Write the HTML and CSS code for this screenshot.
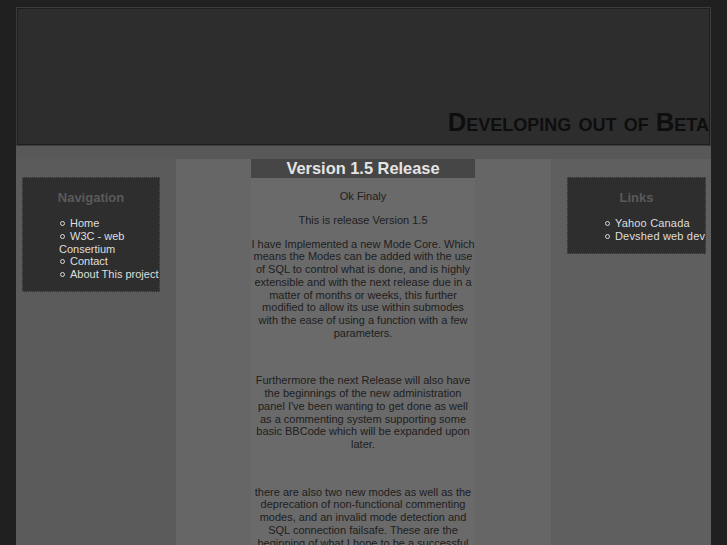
FILE: index.html
```html
<!DOCTYPE html>
<html>
<head>
<meta charset="utf-8">
<title>Developing out of Beta</title>
<link rel="stylesheet" href="styles.css">
</head>
<body>
<div class="page">
  <div class="header">
    <h1 class="site-title">Developing out of Beta</h1>
  </div>
  <div class="band"></div>
  <div class="cols">
    <div class="col-left">
      <div class="box box-left">
        <h3 class="box-title">Navigation</h3>
        <ul class="box-list">
          <li>Home</li>
          <li>W3C - web Consertium</li>
          <li>Contact</li>
          <li class="nowrap">About This project</li>
        </ul>
      </div>
    </div>
    <div class="col-center">
      <div class="content">
        <h2 class="post-title">Version 1.5 Release</h2>
        <p>Ok Finaly</p>
        <p>This is release Version 1.5</p>
        <p>I have Implemented a new Mode Core. Which means the Modes can be added with the use of SQL to control what is done, and is highly extensible and with the next release due in a matter of months or weeks, this further modified to allow its use within submodes with the ease of using a function with a few parameters.</p>
        <p>&nbsp;</p>
        <p>Furthermore the next Release will also have the beginnings of the new administration panel I've been wanting to get done as well as a commenting system supporting some basic BBCode which will be expanded upon later.</p>
        <p>&nbsp;</p>
        <p>there are also two new modes as well as the deprecation of non-functional commenting modes, and an invalid mode detection and SQL connection failsafe. These are the beginning of what I hope to be a successful project.</p>
      </div>
    </div>
    <div class="col-right">
      <div class="box box-right">
        <h3 class="box-title">Links</h3>
        <ul class="box-list">
          <li class="nowrap">Yahoo Canada</li>
          <li class="nowrap">Devshed web development</li>
        </ul>
      </div>
    </div>
  </div>
</div>
</body>
</html>
```

FILE: styles.css
```css
html {
  overflow: hidden;
}
body {
  margin: 0;
  background: #202020;
  font-family: "Liberation Sans", Arial, sans-serif;
  font-size: 11px;
  line-height: 12.75px;
}
.page {
  margin: 7px 0 0 16px;
  width: 695px;
}
.header {
  height: 137px;
  background: #2d2d2d;
  border: 1px solid #3c3c3c;
  box-shadow: inset 0 0 0 1px #1e1e1e;
  display: flex;
  align-items: flex-end;
  justify-content: flex-end;
}
.site-title {
  margin: 0 1px 10px 0;
  font-size: 25.7px;
  line-height: 25px;
  font-weight: bold;
  font-variant: small-caps;
  color: #0e0e0e;
}
.band {
  height: 13px;
  background: #585858;
}
.cols {
  display: flex;
}
.col-left {
  width: 160px;
  background: #5b5b5b;
}
.col-center {
  width: 375px;
  background: #666666;
}
.col-right {
  width: 160px;
  background: #5f5f5f;
}
.content {
  width: 224px;
  margin-left: 75px;
  background: #6a6a6a;
  color: #202020;
  text-align: center;
  padding-bottom: 20px;
}
.post-title {
  margin: 0;
  background: #464646;
  color: #e4e4e4;
  font-size: 16.4px;
  line-height: 19px;
  font-weight: bold;
}
.content p {
  margin: 11px 0;
}
.content p:first-of-type {
  margin-top: 12px;
}
.box {
  margin-top: 18px;
  width: 136px;
  background: #2e2e2e;
  border: 1px dotted #505050;
  padding-bottom: 10px;
}
.box-left {
  margin-left: 6px;
}
.box-right {
  margin-left: 16px;
  width: 137px;
  overflow: hidden;
}
.box-right .box-list {
  letter-spacing: 0.18px;
}
.box-title {
  margin: 12px 0 12px;
  font-size: 13px;
  line-height: 15px;
  text-align: center;
  color: #5a5a5a;
}
.box-list {
  margin: 11px -14px 0 0;
  padding: 0 0 0 36px;
  list-style: none;
  color: #dedede;
}
.box-list li::before {
  content: "";
  display: inline-block;
  width: 3px;
  height: 3px;
  border: 1px solid #d8d8d8;
  border-radius: 50%;
  margin: 0 5px 1px 1px;
  vertical-align: middle;
}
.nowrap {
  white-space: nowrap;
}
```
